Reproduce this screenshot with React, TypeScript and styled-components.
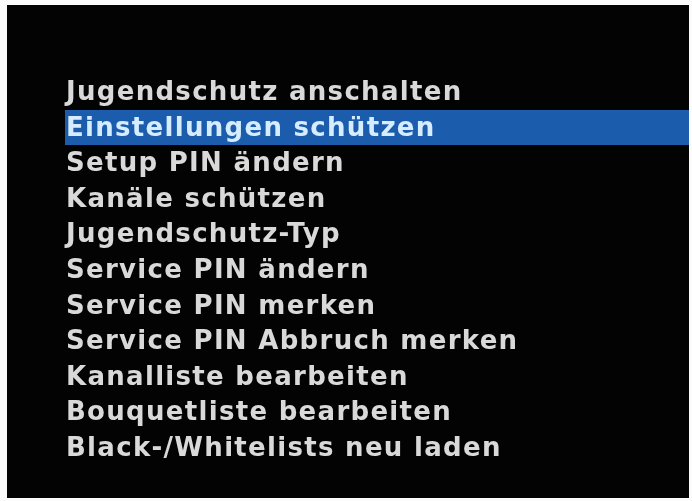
import styled, { createGlobalStyle } from "styled-components";

const GlobalStyle = createGlobalStyle`
  html, body {
    margin: 0;
    padding: 0;
    background: #fbfbfb;
  }
`;

const Frame = styled.div`
  width: 692px;
  height: 501px;
  box-sizing: border-box;
  padding: 5px 3px 3px 7px;
  background: #fbfbfb;
`;

const Screen = styled.div`
  width: 100%;
  height: 100%;
  background: #030303;
  box-sizing: border-box;
  padding: 69px 0 0 58px;
  filter: blur(0.5px);
`;

const Menu = styled.ul`
  list-style: none;
  margin: 0;
  padding: 0;
  display: flex;
  flex-direction: column;
`;

const Item = styled.li<{ $active?: boolean }>`
  height: 35.6px;
  line-height: 35.6px;
  padding-left: 1px;
  font-family: "DejaVu Sans", Verdana, sans-serif;
  font-weight: bold;
  font-size: 26px;
  letter-spacing: 1.3px;
  white-space: nowrap;
  color: ${({ $active }) => ($active ? "#d6ecff" : "#d9d9d9")};
  background: ${({ $active }) => ($active ? "#1b5cad" : "transparent")};
`;

const items = [
  "Jugendschutz anschalten",
  "Einstellungen schützen",
  "Setup PIN ändern",
  "Kanäle schützen",
  "Jugendschutz-Typ",
  "Service PIN ändern",
  "Service PIN merken",
  "Service PIN Abbruch merken",
  "Kanalliste bearbeiten",
  "Bouquetliste bearbeiten",
  "Black-/Whitelists neu laden",
];

export default function App() {
  return (
    <>
      <GlobalStyle />
      <Frame>
        <Screen>
          <Menu>
            {items.map((label, i) => (
              <Item key={label} $active={i === 1}>
                {label}
              </Item>
            ))}
          </Menu>
        </Screen>
      </Frame>
    </>
  );
}
